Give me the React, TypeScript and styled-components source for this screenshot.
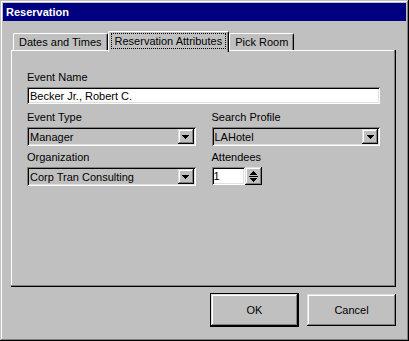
import React from "react"
import styled, { createGlobalStyle } from "styled-components"

const GlobalStyle = createGlobalStyle`
  html, body {
    margin: 0;
    padding: 0;
    background: #c0c0c0;
  }
  body {
    font-family: "Liberation Sans", Arial, sans-serif;
    font-size: 11px;
    color: #000;
  }
`

const raised = `
  box-shadow: inset -1px -1px #000, inset 1px 1px #dfdfdf,
    inset -2px -2px #808080, inset 2px 2px #fff;
`

const sunken = `
  box-shadow: inset 1px 1px #808080, inset -1px -1px #fff,
    inset 2px 2px #000, inset -2px -2px #dfdfdf;
`

export default function App(): JSX.Element {
  return (
    <>
      <GlobalStyle />
      <Window>
        <TitleBar>Reservation</TitleBar>
        <Body>
          <TabStrip>
            <Tab>Dates and Times</Tab>
            <Tab $active>
              <Focus>Reservation Attributes</Focus>
            </Tab>
            <Tab>Pick Room</Tab>
          </TabStrip>
          <Panel>
            <Form>
              <Field $wide>
                <Label>Event Name</Label>
                <TextBox readOnly value="Becker Jr., Robert C." />
              </Field>
              <Field>
                <Label>Event Type</Label>
                <Combo value="Manager" />
              </Field>
              <Field>
                <Label>Search Profile</Label>
                <Combo value="LAHotel" />
              </Field>
              <Field>
                <Label>Organization</Label>
                <Combo value="Corp Tran Consulting" />
              </Field>
              <Field>
                <Label>Attendees</Label>
                <SpinRow>
                  <NumberBox readOnly value="1" />
                  <Spinner>
                    <svg width="9" height="11" viewBox="0 0 9 11" shapeRendering="crispEdges">
                      <path d="M4 0h1v1H4zM3 1h3v1H3zM2 2h5v1H2zM1 3h7v1H1z" fill="#000" />
                      <path d="M0 5h9v1H0z" fill="#000" />
                      <path d="M1 7h7v1H1zM2 8h5v1H2zM3 9h3v1H3zM4 10h1v1H4z" fill="#000" />
                    </svg>
                  </Spinner>
                </SpinRow>
              </Field>
            </Form>
          </Panel>
          <ButtonRow>
            <Button $default>OK</Button>
            <Button>Cancel</Button>
          </ButtonRow>
        </Body>
      </Window>
    </>
  )
}

function Combo({ value }: { value: string }) {
  return (
    <ComboBox>
      <ComboValue>{value}</ComboValue>
      <DropButton>
        <svg width="7" height="4" viewBox="0 0 7 4" shapeRendering="crispEdges">
          <path d="M0 0h7v1H0zM1 1h5v1H1zM2 2h3v1H2zM3 3h1v1H3z" fill="#000" />
        </svg>
      </DropButton>
    </ComboBox>
  )
}

const Window = styled.div`
  width: 409px;
  height: 341px;
  box-sizing: border-box;
  padding: 3px;
  background: #c0c0c0;
  display: flex;
  flex-direction: column;
  box-shadow: inset -1px -1px #000, inset 1px 1px #c0c0c0,
    inset -2px -2px #808080, inset 2px 2px #fff;
`

const TitleBar = styled.div`
  height: 18px;
  background: #000080;
  color: #fff;
  font-weight: bold;
  font-size: 11px;
  display: flex;
  align-items: center;
  padding-left: 3px;
`

const Body = styled.div`
  flex: 1;
  display: flex;
  flex-direction: column;
  padding: 10px 10px 0 8px;
`

const TabStrip = styled.div`
  display: flex;
  align-items: flex-end;
  height: 19px;
  padding-left: 2px;
`

const Tab = styled.div<{ $active?: boolean }>`
  position: relative;
  z-index: ${(p) => (p.$active ? 1 : 0)};
  box-sizing: border-box;
  height: ${(p) => (p.$active ? 21 : 17)}px;
  margin-bottom: ${(p) => (p.$active ? -2 : 0)}px;
  padding: ${(p) => (p.$active ? "1px 2px 0" : "2px 5px 0")};
  line-height: 13px;
  background: #c0c0c0;
  border: 1px solid;
  border-color: #fff #000 transparent #fff;
  border-bottom: none;
  border-radius: 2px 2px 0 0;
  box-shadow: inset -1px 0 #808080;
  white-space: nowrap;
`

const Focus = styled.span`
  display: block;
  padding: 1px 3px;
  line-height: 12px;
  border: 1px dotted #000;
`

const Panel = styled.div`
  height: 237px;
  box-sizing: border-box;
  padding: 21px 16px 0;
  box-shadow: inset -1px -1px #000, inset -2px -2px #808080,
    inset 1px 1px #fff;
`

const Form = styled.div`
  display: grid;
  grid-template-columns: 1fr 1fr;
  grid-auto-rows: 40px;
  column-gap: 16px;
`

const Field = styled.div<{ $wide?: boolean }>`
  display: flex;
  flex-direction: column;
  grid-column: ${(p) => (p.$wide ? "1 / -1" : "auto")};
`

const Label = styled.div`
  line-height: 12px;
  margin-bottom: 4px;
  white-space: nowrap;
`

const TextBox = styled.input`
  height: 17px;
  box-sizing: border-box;
  border: none;
  outline: none;
  margin: 0;
  padding: 0 3px;
  font: inherit;
  color: #000;
  background: #fff;
  ${sunken}
`

const ComboBox = styled.div`
  height: 19px;
  box-sizing: border-box;
  display: flex;
  align-items: center;
  padding: 2px;
  background: #c0c0c0;
  ${sunken}
`

const ComboValue = styled.span`
  flex: 1;
  padding-left: 1px;
  white-space: nowrap;
  overflow: hidden;
`

const DropButton = styled.div`
  width: 16px;
  height: 15px;
  display: flex;
  align-items: center;
  justify-content: center;
  ${raised}
`

const SpinRow = styled.div`
  display: flex;
`

const NumberBox = styled(TextBox)`
  width: 33px;
  height: 18px;
  padding-left: 2px;
`

const Spinner = styled.div`
  width: 17px;
  height: 18px;
  box-sizing: border-box;
  display: flex;
  align-items: center;
  justify-content: center;
  ${raised}
`

const ButtonRow = styled.div`
  display: flex;
  justify-content: flex-end;
  align-items: center;
  gap: 8px;
  margin-top: 6px;
  height: 34px;
`

const Button = styled.div<{ $default?: boolean }>`
  width: 89px;
  height: ${(p) => (p.$default ? 34 : 32)}px;
  box-sizing: border-box;
  display: flex;
  align-items: center;
  justify-content: center;
  border: ${(p) => (p.$default ? "1px solid #000" : "none")};
  ${raised}
`
